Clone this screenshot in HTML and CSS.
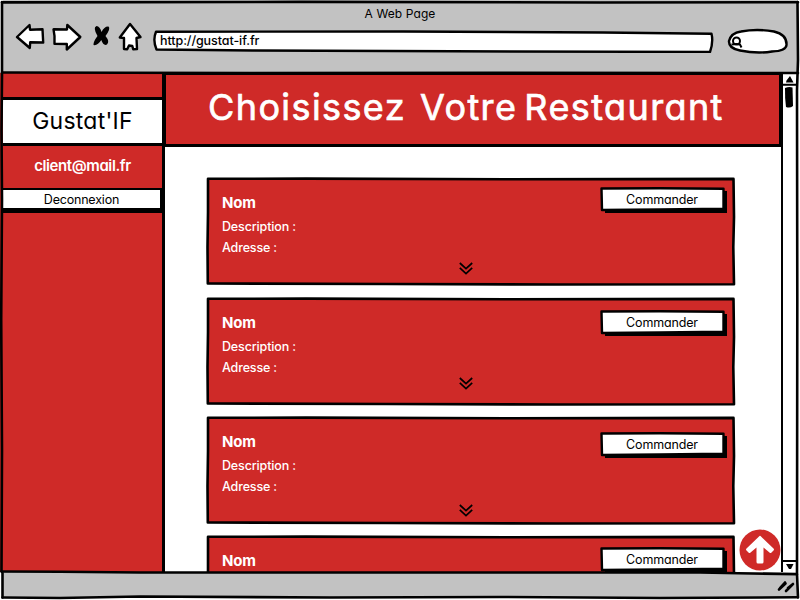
FILE: index.html
```html
<!DOCTYPE html>
<html lang="fr">
<head>
<meta charset="utf-8">
<title>A Web Page</title>
<link rel="stylesheet" href="styles.css">
</head>
<body>
<svg class="defs" width="0" height="0">
  <symbol id="card-frame" viewBox="0 0 530 110"><path class="ink" d="M2 1.800 100 1.600 300 2.300 527.500 1.900 528 40 527.300 70 528 107.300 350 107.500 180 107 1.800 106.500 1.500 70 2 35Z"/></symbol>
  <symbol id="button-frame" viewBox="0 0 128 27"><path d="M124 4 127 4 127 26 5 26 5 23 124 22Z"/><path class="paper" d="M1.500 1.500 60 1.300 123.500 1.800 123.500 21.800 60 22.500 2 23Z"/></symbol>
  <symbol id="chevrons" viewBox="0 0 14 13"><path class="thin" d="M.8 1 7 6.600 13.200 1M.8 5.800 7 11.600 13.200 5.800"/></symbol>
</svg>
<div class="window">
  <header class="chrome">
    <div class="title">A Web Page</div>
    <nav class="toolbar">
      <svg class="nav" width="132" height="32" viewBox="0 0 132 32">
        <path class="paper" d="M2 16 14.500 4 15 8.700 27.500 8.300 28.200 21.500 15.200 21.300 14.800 27Z"/>
        <path class="paper" d="M38.500 8.300 52 8.500 52.300 4 65.300 16 51.800 28.500 51.800 23 39.500 22.800Q40 14.500 38.500 8.300Z"/>
        <path d="M81.500 5Q85 5.500 86.500 11 89.500 5 93.500 5.500Q96 7.500 90.500 15 95 20.500 92 23.500 88.500 25.300 86.300 19 82.500 25 78.500 24 78 21 82.500 15 77.500 6.500 81.500 5Z"/>
        <path class="paper" d="M115 3 125.500 16 121.500 17 122 28 118.200 28.300 117.300 25 114 24.500 112.200 28.300 109 28 109 17 104.800 16.500Z"/>
      </svg>
      <div class="address">
        <svg class="sketch" viewBox="0 0 561 23"><path class="paper" d="M3 1.700 250 1.500 450 2.500 558.500 3.800Q560.500 12 557 22L300 21.300 100 20.500 3.500 19.500Q-.5 10 3 1.700Z"/></svg>
        <span>http://gustat-if.fr</span>
      </div>
      <svg class="search" width="62" height="26" viewBox="0 0 62 26"><path class="paper" d="M14 3.500Q30 .5 47 3.500 60 6.500 59.500 17 59 23 45 23.500 30 26 13 22.500 1.500 20.500 2 13 4 5 14 3.500Z"/><circle class="glass" cx="9.500" cy="13" r="3.500"/><path class="glass" d="M4.500 16.500Q10 15.500 13 16.500L14.500 19.500"/></svg>
    </nav>
  </header>

  <div class="viewport">
    <aside class="sidebar">
      <div class="brand">Gustat'IF</div>
      <div class="email">client@mail.fr</div>
      <div class="logout">Deconnexion</div>
    </aside>
    <main class="content">
      <h1 class="heading">Choisissez&nbsp; Votre Restaurant</h1>
      <div class="cards">
        <section class="card"><svg class="sketch"><use href="#card-frame"/></svg>
          <div class="details"><h2>Nom</h2><p>Description :</p><p class="adr">Adresse :</p></div>
          <svg class="more first"><use href="#chevrons"/></svg>
          <div class="order first"><svg class="sketch"><use href="#button-frame"/></svg><span>Commander</span></div>
        </section>
        <section class="card second"><svg class="sketch"><use href="#card-frame"/></svg>
          <div class="details"><h2>Nom</h2><p>Description :</p><p class="adr">Adresse :</p></div>
          <svg class="more second"><use href="#chevrons"/></svg>
          <div class="order"><svg class="sketch"><use href="#button-frame"/></svg><span>Commander</span></div>
        </section>
        <section class="card"><svg class="sketch"><use href="#card-frame"/></svg>
          <div class="details"><h2>Nom</h2><p>Description :</p><p class="adr">Adresse :</p></div>
          <svg class="more third"><use href="#chevrons"/></svg>
          <div class="order third"><svg class="sketch"><use href="#button-frame"/></svg><span>Commander</span></div>
        </section>
        <section class="card"><svg class="sketch"><use href="#card-frame"/></svg>
          <div class="details"><h2>Nom</h2></div>
          <span></span>
          <div class="order fourth"><svg class="sketch"><use href="#button-frame"/></svg><span>Commander</span></div>
        </section>
      </div>
      <svg class="to-top" viewBox="0 0 42 42"><circle cx="21" cy="21" r="20.500"/><path d="M20 7.500Q21 6 22 7.500L34.500 19.500Q35.500 20.500 34.500 21.500L32.500 23.500Q31.500 24.500 30.500 23.500L24.500 18.500V33Q24.500 34.500 23 34.500H19Q17.500 34.500 17.500 33V18.500L11.500 23.500Q10.500 24.500 9.500 23.500L7.500 21.500Q6.500 20.500 7.500 19.500Z"/></svg>
    </main>
    <div class="scrollbar">
      <svg width="14" height="36" viewBox="0 0 14 36"><path d="M3 8.500 3.500 6.500 7 2 10.500 8.500ZM0 9.700H14V11.700H0Z"/><path d="M2 14Q6 12.500 9.500 13.500L10 32Q7 34.500 3 33 1.800 24 2 14Z"/></svg>
      <svg width="14" height="12" viewBox="0 0 14 12"><path d="M0 0H14V2H0ZM3 4H10.500L8 9H6Z"/></svg>
    </div>
  </div>

  <footer class="status">
    <svg width="20" height="16" viewBox="0 0 20 16"><path class="grip" d="M3 11.500 9.500 5.500M10 13 16.500 6.500M4 10 9 4.500M12 10 17 6"/></svg>
  </footer>

  <svg class="outline" viewBox="0 0 800 600">
    <path class="ink" d="M2 2.400 300 1.900 600 2.500 798 2.200"/>
    <path class="ink" d="M2 2 2 75 1.500 130 2 200 1.200 320 2 450 1.500 571 2.500 573 2.500 597.500"/>
    <path class="ink" d="M2.500 597.500 60 598 140 596.500 330 597.500 500 597 660 598 797.500 597.300"/>
    <path class="ink" d="M797.500 2 798 60 797 90 797.300 300 797 574 798 597.500"/>
    <path class="ink" d="M2 72.500 250 73 500 72.700 798 73"/>
    <path class="ink" d="M1.500 571.500 60 571.800 140 572.500 400 572.500 700 572.500 797 574.300"/>
  </svg>
</div>
</body>
</html>
```
FILE: styles.css
```css
* { box-sizing: border-box; }
body {
  margin: 0;
  font-family: Inter, "Open Sans", sans-serif;
  font-feature-settings: "cv11";
  font-size: 13px;
  color: #000;
  overflow: hidden;
}
h1, h2, p { margin: 0; }
svg { display: block; }
.defs { position: absolute; }
.ink { fill: none; stroke: #000; stroke-width: 2.6; stroke-linejoin: round; stroke-linecap: round; }
.paper { fill: #fff; stroke: #000; stroke-width: 2.4; stroke-linejoin: round; }
.thin { fill: none; stroke: #000; stroke-width: 1.7; }
.glass { fill: none; stroke: #000; stroke-width: 2; }
.grip { fill: none; stroke: #000; stroke-width: 2.6; stroke-linecap: round; }
.sketch { position: absolute; left: 0; top: 0; width: 100%; height: 100%; }
.window { position: relative; width: 800px; height: 600px; display: flex; flex-direction: column; background: #fff; }
.outline { position: absolute; left: 0; top: 0; width: 800px; height: 600px; pointer-events: none; }
.chrome { height: 73px; margin: 0 2px 0 3px; background: #c2c2c2; }
.title { padding-top: 5px; height: 21px; line-height: 17px; text-align: center; font-size: 12px; letter-spacing: .1px; padding-right: 1px; }
.toolbar { display: flex; align-items: flex-start; padding-left: 12px; }
.nav { margin-right: 6px; }
.address { position: relative; width: 561px; height: 23px; margin-top: 9px; padding: 3px 0 0 7px; line-height: 16px; font-size: 12.5px; letter-spacing: -.07px; font-weight: 500; }
.address span { position: relative; }
.search { margin: 7px 0 0 13px; }
.viewport { height: 499px; display: grid; grid-template-columns: 165px 616px 16px; overflow: hidden; }
.sidebar { background: #cf2a28; border-right: 3px solid #000; padding-top: 24px; padding-left: 3px; }
.brand { height: 49px; border-top: 3px solid #000; border-bottom: 3px solid #000; background: #fff; text-align: center; font-size: 23px; line-height: 43px; letter-spacing: .25px; }
.email { height: 42px; color: #fff; text-align: center; font-size: 15px; font-weight: 600; letter-spacing: -.4px; line-height: 39px; }
.logout { height: 25px; background: #fff; border: 2px solid #000; border-width: 2px 2px 5px 0; text-align: center; line-height: 19px; font-size: 12.5px; letter-spacing: -.2px; }
.content { position: relative; height: 499px; overflow: hidden; }
.heading { height: 74px; background: #cf2a28; border: 2px solid #000; border-width: 2px 2px 3px 1px; color: #fff; font-size: 36px; font-weight: 400; line-height: 65px; padding-left: 42px; letter-spacing: 1.4px; word-spacing: -4.5px; white-space: nowrap; -webkit-text-stroke: .7px #fff; }
.cards { display: flex; flex-direction: column; gap: 9px; padding: 30px 0 0 41px; }
.card { position: relative; width: 530px; height: 110px; flex: none; display: grid; grid-template-columns: 238px 156px 128px; background: linear-gradient(#cf2a28, #cf2a28) 2px 2px / 526px 105px no-repeat; color: #fff; }
.card.second { margin-top: 1px; }
.details { padding: 17px 0 0 16px; position: relative; }
.details h2 { font-size: 15px; line-height: 18px; font-weight: 700; letter-spacing: -.2px; }
.details p { font-size: 12.5px; line-height: 18px; margin-top: 6px; font-weight: 500; letter-spacing: -.15px; white-space: nowrap; }
.details .adr { margin-top: 3px; }
.more { width: 14px; height: 13px; margin: 85px 0 0 15px; }
.more.second { margin-top: 80px; }
.more.third { margin-top: 88px; }
.order { position: relative; width: 128px; height: 27px; margin-top: 13px; color: #000; text-align: center; line-height: 26px; padding-right: 4px; font-size: 12.5px; letter-spacing: -.15px; }
.order.first { margin-top: 10px; }
.order.third { margin-top: 16px; }
.order.fourth { margin-top: 12px; }
.order span { position: relative; }
.to-top { position: absolute; left: 574px; top: 456px; width: 42px; height: 42px; }
.to-top circle { fill: #cf2a28; }
.to-top path { fill: #fff; }
.scrollbar { border-left: 2px solid #000; display: flex; flex-direction: column; justify-content: space-between; padding-top: 1px; }
.status { height: 25px; margin: 0 2px 0 3px; background: #c2c2c2; display: flex; justify-content: flex-end; padding: 6px 2px 0 0; }
```
